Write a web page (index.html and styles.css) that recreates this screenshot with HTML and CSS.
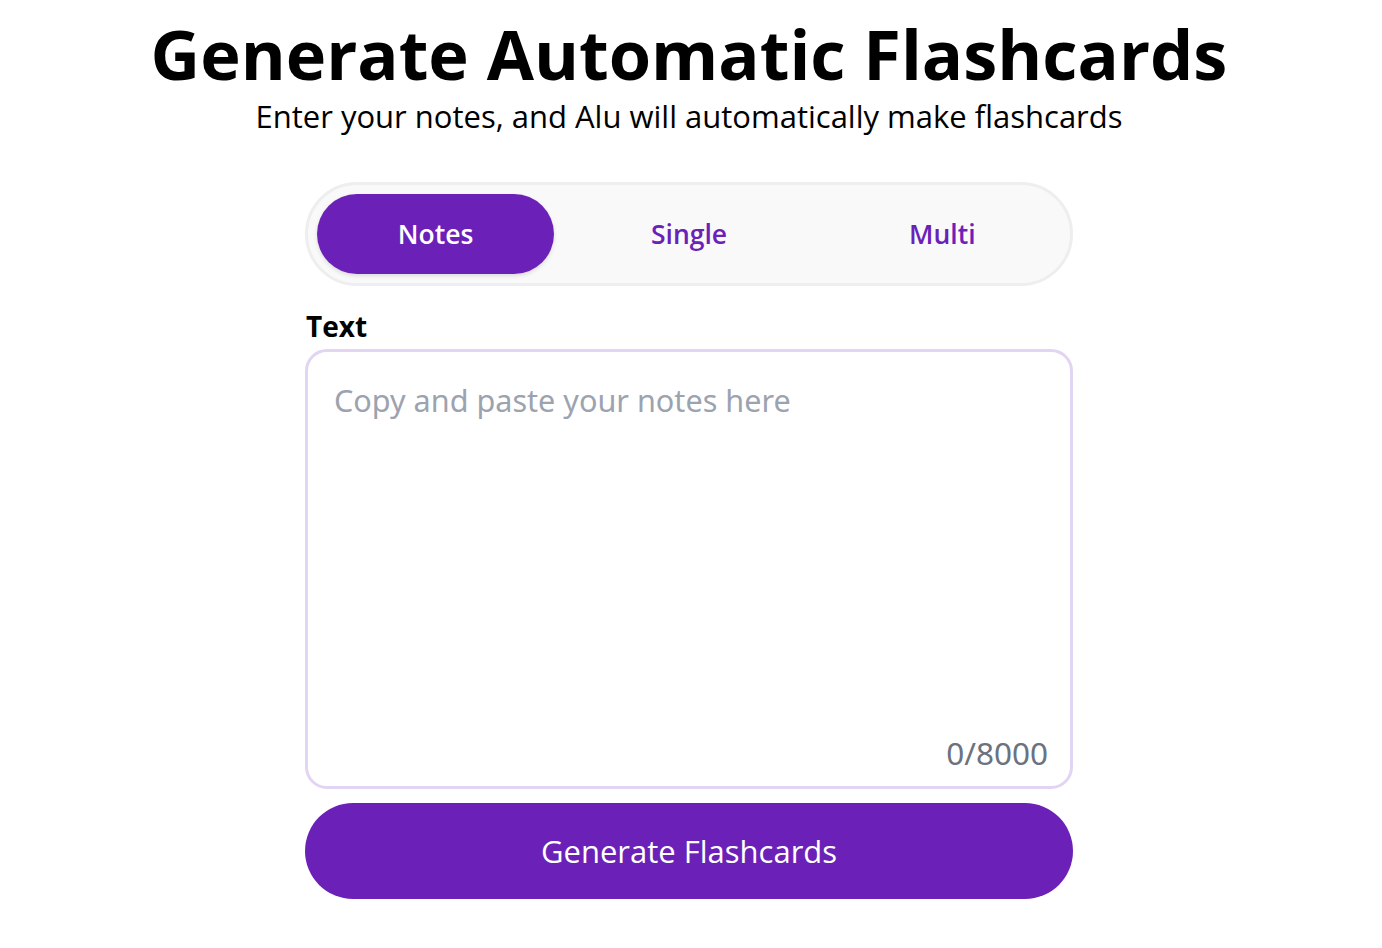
FILE: index.html
```html
<!DOCTYPE html>
<html>
<head>
<meta charset="utf-8">
<link rel="stylesheet" href="styles.css">
</head>
<body>
<main class="page">
  <header class="head">
    <h1 class="title">Generate Automatic Flashcards</h1>
    <p class="subtitle">Enter your notes, and Alu will automatically make flashcards</p>
  </header>
  <section class="form">
    <div class="tabs">
      <button class="tab tab-active">Notes</button>
      <button class="tab">Single</button>
      <button class="tab">Multi</button>
    </div>
    <label class="label">Text</label>
    <div class="area">
      <div class="placeholder">Copy and paste your notes here</div>
      <div class="counter">0/8000</div>
    </div>
    <button class="generate">Generate Flashcards</button>
  </section>
</main>
</body>
</html>
```
FILE: styles.css
```css
* { box-sizing: border-box; }
html, body { margin: 0; padding: 0; background: #fff; }
body { font-family: "Open Sans", "Noto Sans", sans-serif; color: #000; }
.page { display: flex; flex-direction: column; align-items: center; padding-right: 4px; }
.head { display: flex; flex-direction: column; align-items: center; padding-top: 16px; }
.title { margin: 0; font-size: 68.5px; font-weight: 700; line-height: 76px; letter-spacing: 0; }
.subtitle { margin: 3px 0 0; font-size: 31px; line-height: 42px; font-weight: 400; }
.form { width: 768px; display: flex; flex-direction: column; margin-top: 45px; }
.tabs { display: grid; grid-template-columns: repeat(3, 1fr); gap: 16px; padding: 9px; border: 3px solid #eeeeee; background: #f9f9f9; border-radius: 60px; }
.tab { border: 0; background: transparent; height: 80px; border-radius: 40px; font-family: inherit; font-size: 26.5px; font-weight: 600; color: #6b21b8; }
.tab-active { background: #6b21b8; color: #fff; box-shadow: 0 2px 4px rgba(0,0,0,0.12); }
.label { font-size: 28px; font-weight: 700; margin-top: 20px; line-height: 40px; padding-left: 1px; }
.area { height: 440px; margin-top: 3px; border: 3px solid #e2d5f3; border-radius: 22px; padding: 28px 22px 13px 26px; display: flex; flex-direction: column; justify-content: space-between; }
.placeholder { font-family: "Noto Sans", sans-serif; font-size: 30.6px; color: #9ca3af; line-height: 40px; }
.counter { align-self: flex-end; font-family: "Noto Sans", sans-serif; font-size: 31.5px; color: #6b7280; line-height: 40px; }
.generate { margin-top: 14px; height: 96px; border: 0; border-radius: 48px; background: #6b21b8; color: #fff; font-family: inherit; font-size: 31px; font-weight: 400; }
```
